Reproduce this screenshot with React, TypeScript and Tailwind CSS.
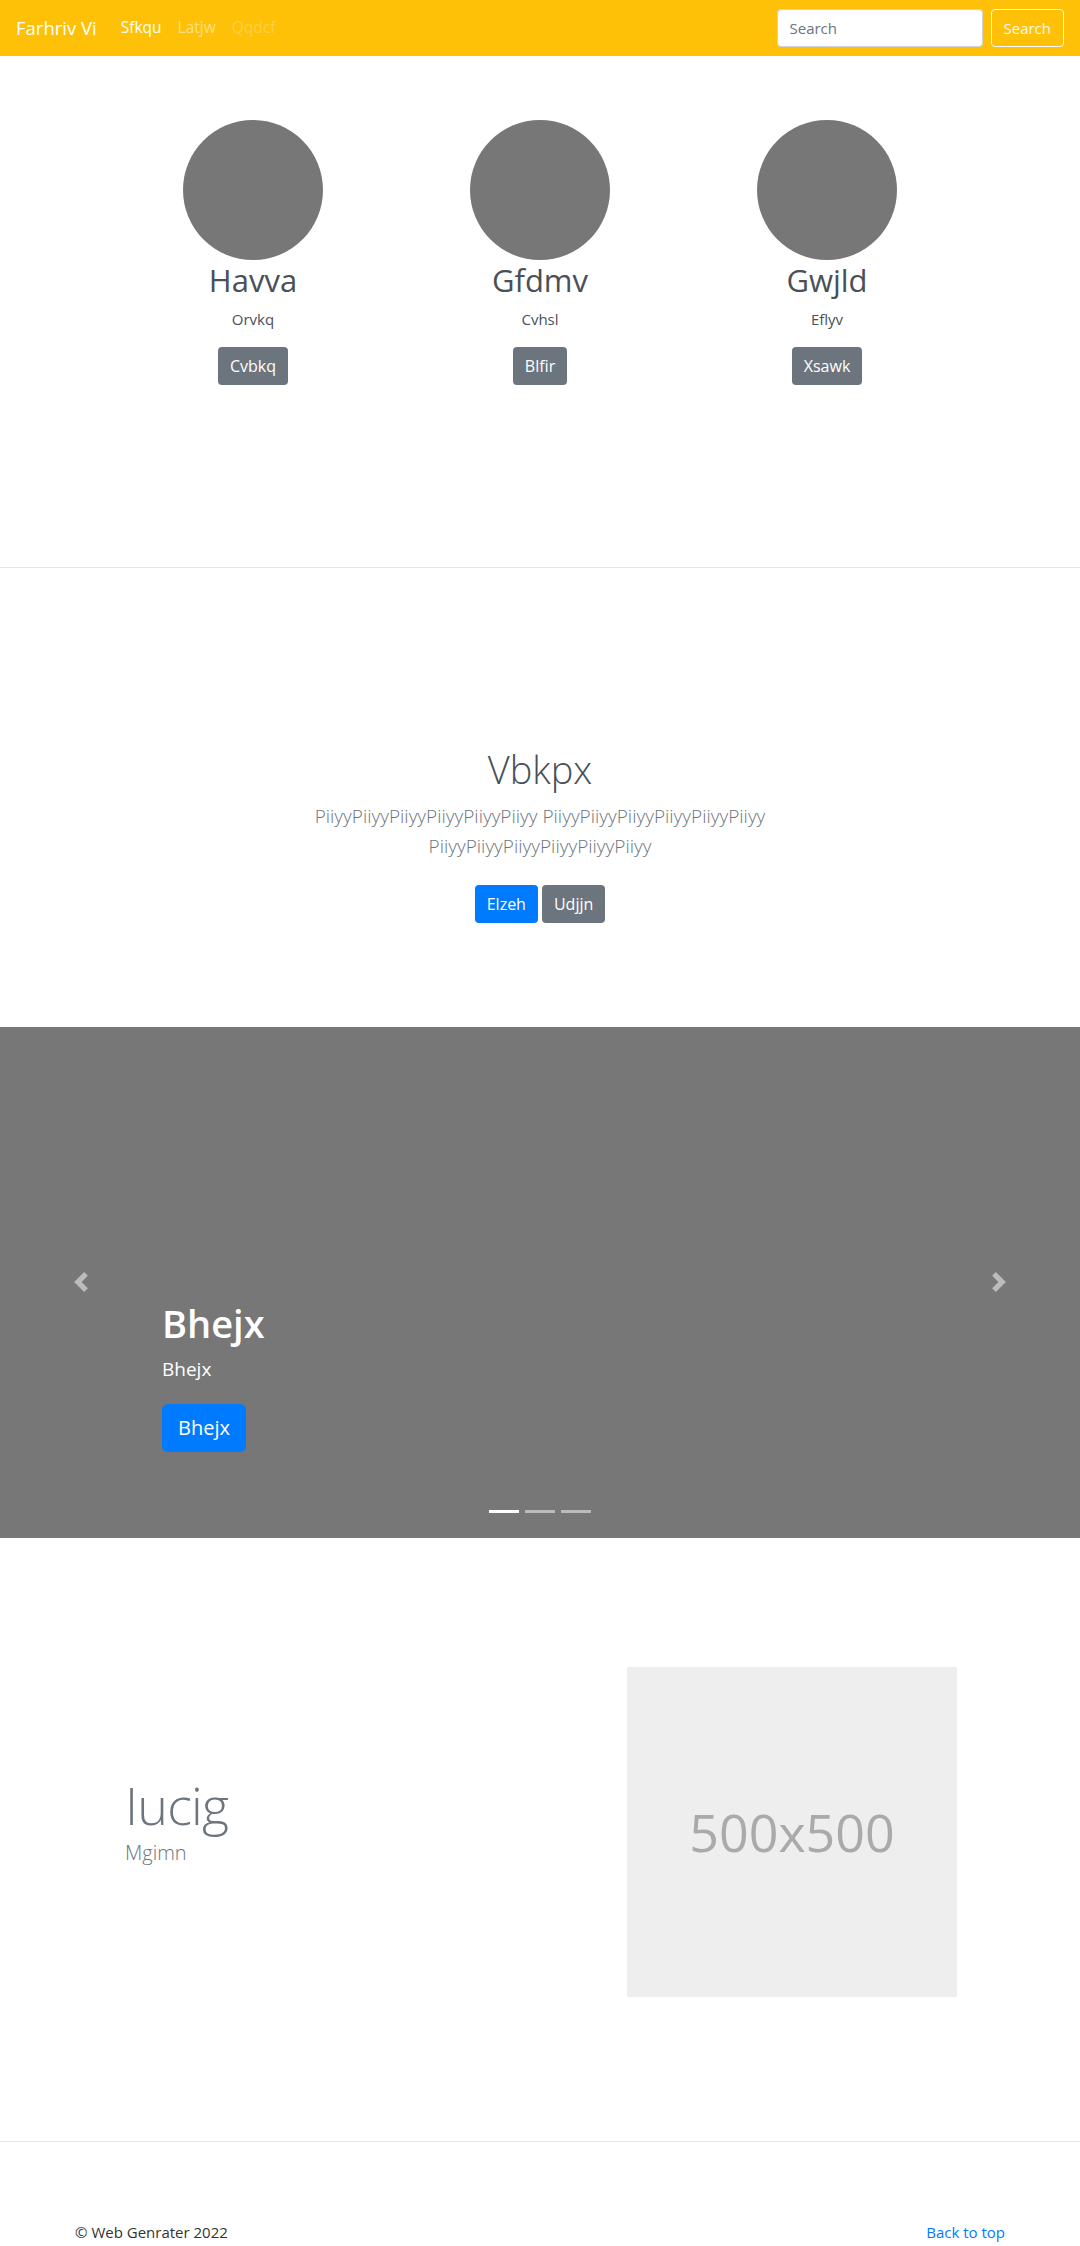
import React from 'react'

const font = "font-['Open_Sans','Noto_Sans',sans-serif]"

interface Member {
  name: string
  role: string
  action: string
}

const members: Member[] = [
  { name: 'Havva', role: 'Orvkq', action: 'Cvbkq' },
  { name: 'Gfdmv', role: 'Cvhsl', action: 'Blfir' },
  { name: 'Gwjld', role: 'Eflyv', action: 'Xsawk' },
]

function Chevron({ flip }: { flip?: boolean }) {
  return (
    <svg viewBox="0 0 8 8" className="h-5 w-5" fill="#fff" style={{ opacity: 0.5 }}>
      {flip ? (
        <path d="M2.75 0l-1.5 1.5 2.5 2.5-2.5 2.5 1.5 1.5 4-4-4-4z" />
      ) : (
        <path d="M5.25 0l-4 4 4 4 1.5-1.5-2.5-2.5 2.5-2.5-1.5-1.5z" />
      )}
    </svg>
  )
}

export default function App(): React.JSX.Element {
  return (
    <div className={`min-h-screen bg-white text-[#212529] ${font}`}>
      {/* Navbar */}
      <nav className="flex h-14 items-center bg-[#ffc107] pl-4 pr-4">
        <a href="#" className="mr-4 text-[18.5px] text-white">
          Farhriv Vi
        </a>
        <ul className="flex text-[15.5px]">
          <li>
            <a href="#" className="px-2 text-white">Sfkqu</a>
          </li>
          <li>
            <a href="#" className="px-2 text-white/50">Latjw</a>
          </li>
          <li>
            <a href="#" className="px-2 text-white/25">Qqdcf</a>
          </li>
        </ul>
        <form className="ml-auto flex gap-2" onSubmit={(e) => e.preventDefault()}>
          <input
            type="text"
            placeholder="Search"
            className="h-[38px] w-[206px] rounded border border-[#ced4da] bg-white px-3 text-[15px] text-[#495057] placeholder:text-[#6c757d] outline-none"
          />
          <button className="h-[38px] rounded border border-[#f8f9fa] px-3 text-[15px] text-[#f8f9fa]">
            Search
          </button>
        </form>
      </nav>

      {/* Team */}
      <section className="border-b border-[#e5e5e5] pt-16 pb-[182px]">
        <div className="mx-auto grid w-[861px] grid-cols-3">
          {members.map((m) => (
            <div key={m.name} className="flex flex-col items-center">
              <div className="h-[140px] w-[140px] rounded-full bg-[#777]" />
              <h2 className="text-[31px] leading-[40px] text-[#495057]">{m.name}</h2>
              <p className="mt-2 text-[15px] text-[#495057]">{m.role}</p>
              <button className="mt-4 h-[38px] rounded bg-[#6c757d] px-3 text-base text-white">
                {m.action}
              </button>
            </div>
          ))}
        </div>
      </section>

      {/* Jumbotron */}
      <section className="flex flex-col items-center pt-[177px] pb-[104px] text-center">
        <h1 className="text-[38px] leading-[48px] font-light text-[#495057]">Vbkpx</h1>
        <p className="mt-2 max-w-[520px] text-[19px] leading-[30px] font-light text-[#6c757d]">
          PiiyyPiiyyPiiyyPiiyyPiiyyPiiyy PiiyyPiiyyPiiyyPiiyyPiiyyPiiyy PiiyyPiiyyPiiyyPiiyyPiiyyPiiyy
        </p>
        <div className="mt-6 flex gap-1">
          <button className="h-[38px] rounded bg-[#007bff] px-3 text-base text-white">Elzeh</button>
          <button className="h-[38px] rounded bg-[#6c757d] px-3 text-base text-white">Udjjn</button>
        </div>
      </section>

      {/* Carousel */}
      <section className="relative flex h-[511px] flex-col justify-end bg-[#777] pb-[86px] pl-[162px] text-white">
        <h3 className="text-[38px] leading-[1.2] font-semibold">Bhejx</h3>
        <p className="mt-2 text-[19px]">Bhejx</p>
        <div className="mt-5">
          <button className="h-12 rounded-md bg-[#007bff] px-4 text-xl text-white">Bhejx</button>
        </div>

        <button className="absolute top-0 bottom-0 left-0 flex w-[15%] items-center justify-center">
          <Chevron />
        </button>
        <button className="absolute top-0 right-0 bottom-0 flex w-[15%] items-center justify-center">
          <Chevron flip />
        </button>
        <ol className="absolute bottom-[25px] left-0 right-0 flex justify-center gap-1.5">
          <li className="h-[3px] w-[30px] bg-white" />
          <li className="h-[3px] w-[30px] bg-white/50" />
          <li className="h-[3px] w-[30px] bg-white/50" />
        </ol>
      </section>

      {/* Featurette */}
      <section className="flex items-center border-b border-[#e5e5e5] pt-[129px] pb-[144px] pl-[125px] pr-[123px]">
        <div className="flex-1 pb-[18px]">
          <h2 className="text-[52px] leading-none font-light tracking-[-0.05rem] text-[#6c757d]">Iucig</h2>
          <p className="mt-2 text-xl font-light text-[#6c757d]">Mgimn</p>
        </div>
        <div className="flex h-[330px] w-[330px] items-center justify-center bg-[#eee]">
          <span className="text-[52px] text-[#aaa]">500x500</span>
        </div>
      </section>

      {/* Footer */}
      <footer className="flex justify-between px-[75px] pt-[79px] text-[15px]">
        <p className="text-[#333]">© Web Genrater 2022</p>
        <a href="#" className="text-[#007bff]">Back to top</a>
      </footer>
    </div>
  )
}
